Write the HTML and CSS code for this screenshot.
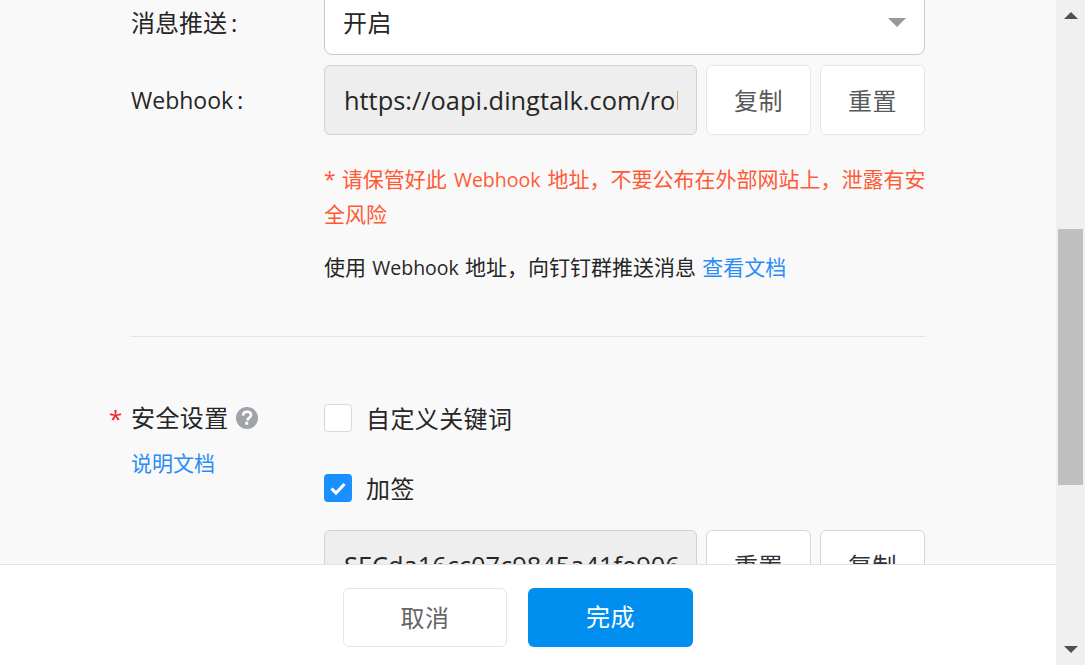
FILE: index.html
```html
<!DOCTYPE html>
<html lang="zh">
<head>
<meta charset="utf-8">
<title>Webhook</title>
<link rel="stylesheet" href="styles.css">
</head>
<body>
<div class="page">
  <main class="main">
    <div class="scroll">
      <form class="form">
        <div class="row row-select">
          <div class="label">消息推送<span class="colon">:</span></div>
          <div class="select"><span>开启</span><i class="caret"></i></div>
        </div>
        <div class="row row-hook">
          <div class="label"><span class="label-en">Webhook</span><span class="colon">:</span></div>
          <div class="inputs">
            <div class="input"><div class="input-text">https://oapi.dingtalk.com/robot/send?access_token=</div></div>
            <div class="btn">复制</div>
            <div class="btn">重置</div>
          </div>
        </div>
        <div class="row">
          <div></div>
          <div class="notes">
            <p class="warn"><span class="asterisk">*</span> 请保管好此 <span class="en">Webhook</span> 地址，不要公布在外部网站上，泄露有安全风险</p>
            <p class="doc">使用 <span class="en">Webhook</span> 地址，向钉钉群推送消息 <a class="link">查看文档</a></p>
          </div>
        </div>
        <hr class="divider">
        <div class="row">
          <div class="label label-sec">
            <div class="sec-title"><span class="star">*</span>安全设置
              <svg class="help" viewBox="0 0 22 22" width="22" height="22"><circle cx="11" cy="11" r="11" fill="#a0a3a8"/><path d="M7 8.600c.1-2.500 1.700-3.900 4.100-3.900s3.900 1.300 3.900 3.200c0 1.500-.8 2.300-1.900 3-1 .7-1.500 1.200-1.500 2.500" fill="none" stroke="#fff" stroke-width="2.600"/><rect x="9.200" y="14.800" width="3" height="2.900" fill="#fff"/></svg>
            </div>
            <a class="link sec-doc">说明文档</a>
          </div>
          <div class="sec-body">
            <div class="check"><span class="box"></span><span class="check-text">自定义关键词</span></div>
            <div class="check check-on"><span class="box box-on"><svg viewBox="0 0 28 28" width="28" height="28"><path d="M7.500 14.500l4.500 4.500 8.500-9" fill="none" stroke="#fff" stroke-width="3"/></svg></span><span class="check-text">加签</span></div>
            <div class="inputs">
              <div class="input"><div class="input-text">SECda16cc07c9845a41fe906c2b8d3e71</div></div>
              <div class="btn btn-dark">重置</div>
              <div class="btn btn-dark">复制</div>
            </div>
          </div>
        </div>
      </form>
    </div>
    <footer class="footer">
      <div class="fbtn">取消</div>
      <div class="fbtn fbtn-primary">完成</div>
    </footer>
  </main>
  <aside class="scrollbar">
    <i class="arrow arrow-up"></i>
    <div class="track"><div class="thumb"></div></div>
    <i class="arrow arrow-down"></i>
  </aside>
</div>
</body>
</html>
```

FILE: styles.css
```css
* { box-sizing: border-box; }
html, body { margin: 0; height: 100%; overflow: hidden; }
body {
  font-family: "Open Sans", "Noto Sans CJK SC", sans-serif;
  color: #262626;
  background: #f9f9f9;
}
.page { display: flex; height: 665px; }
.main { flex: 1; min-width: 0; display: flex; flex-direction: column; }
.scroll { flex: 1; min-height: 0; overflow: hidden; background: #f9f9f9; }
.form { margin-top: -16px; padding-left: 108px; width: 925px; }
.row { display: grid; grid-template-columns: 216px 601px; }
.label { padding-left: 23px; font-size: 24px; line-height: 34px; }
.label-en { font-size: 23px; }
.colon { margin-left: 4px; }
.row-select { align-items: center; height: 71px; }
.row-select .label { padding-top: 7px; }
.select {
  height: 71px;
  display: flex;
  align-items: center;
  justify-content: space-between;
  padding: 3px 18px 0 18px;
  background: #fff;
  border: 1px solid #c9c9c9;
  border-radius: 8px;
  font-size: 24px;
  letter-spacing: .4px;
}
.caret {
  width: 0; height: 0;
  margin-top: 3px;
  border-left: 9px solid transparent;
  border-right: 9px solid transparent;
  border-top: 9px solid #999;
}
.row-hook { margin-top: 10px; }
.row-hook .label { align-self: center; }
.inputs { display: flex; gap: 9px; }
.input {
  width: 373px;
  height: 70px;
  flex: none;
  padding: 0 18px 0 19px;
  background: #eee;
  border: 1px solid #d0d0d0;
  border-radius: 6px;
}
.input-text {
  font-size: 25.400px;
  line-height: 68px;
  white-space: nowrap;
  overflow: hidden;
}
.btn {
  flex: none;
  width: 105px;
  height: 70px;
  background: #fff;
  border: 1px solid #e6e6e6;
  border-radius: 6px;
  color: #595959;
  font-size: 24px;
  letter-spacing: .4px;
  line-height: 70px;
  text-align: center;
}
.btn-dark { color: #333; border-color: #d6d6d6; }
.notes { padding-top: 27px; font-size: 21px; word-spacing: .800px; }
.notes p { margin: 0; }
.en { font-size: 19.500px; }
.asterisk { margin-right: -1px; }
.warn { color: #ff5a36; line-height: 35px; margin-right: -4px !important; word-spacing: 1.700px; }
.doc { margin-top: 18px !important; line-height: 35px; }
.link { color: #2a8cf5; }
.divider {
  margin: 51px 0 0 23px;
  width: 794px;
  height: 1px;
  border: 0;
  background: #e3e3e3;
}
.label-sec { padding-top: 64px; }
.sec-title { display: flex; align-items: center; gap: 7px; position: relative; letter-spacing: .4px; }
.help { margin-top: 0; }
.star {
  position: absolute;
  left: -22px;
  top: 1px;
  color: #f5222d;
  font-size: 24px;
}
.sec-doc { display: block; margin-top: 11px; font-size: 21px; }
.sec-body { padding-top: 67px; }
.check { display: flex; align-items: center; height: 28px; gap: 14px; font-size: 24px; letter-spacing: .4px; }
.check-text { margin-top: -2px; }
.check-on { margin-top: 42px; gap: 14px; }
.box {
  width: 28px; height: 28px;
  flex: none;
  background: #fff;
  border: 1px solid #d9d9d9;
  border-radius: 4px;
}
.box-on { background: #1890ff; border: 0; display: block; }
.box-on svg { display: block; }
.sec-body .inputs { margin-top: 28px; }
.footer {
  flex: none;
  height: 101px;
  display: flex;
  gap: 21px;
  padding: 23px 0 0 343px;
  background: #fff;
  border-top: 1px solid #e3e3e3;
}
.fbtn {
  width: 164px;
  height: 59px;
  background: #fff;
  border: 1px solid #e6e6e6;
  border-radius: 6px;
  color: #666;
  font-size: 24px;
  letter-spacing: .4px;
  line-height: 57px;
  text-align: center;
}
.fbtn-primary { width: 165px; background: #008fef; border: 0; color: #fff; }
.scrollbar {
  flex: none;
  width: 29px;
  display: flex;
  flex-direction: column;
  align-items: center;
  background: #f0f0f0;
}
.arrow { flex: none; width: 0; height: 0; border-left: 7px solid transparent; border-right: 7px solid transparent; }
.arrow-up { margin-top: 12px; border-bottom: 7px solid #505050; }
.arrow-down { margin-bottom: 12px; border-top: 7px solid #505050; }
.track { flex: 1; width: 100%; padding: 210px 2px 0; }
.thumb { height: 256px; background: #bfbfbf; }
```
